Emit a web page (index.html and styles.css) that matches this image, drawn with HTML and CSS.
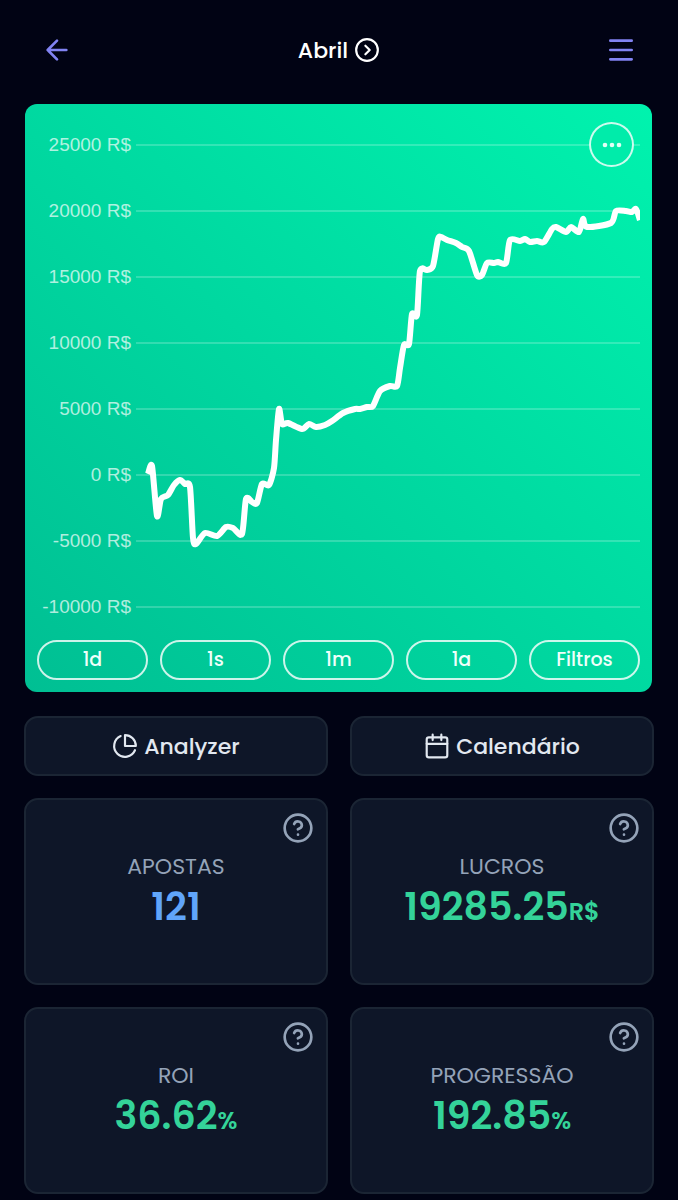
FILE: index.html
```html
<!DOCTYPE html>
<html lang="pt-BR">
<head>
    <meta charset="UTF-8">
    <meta name="viewport" content="width=device-width, initial-scale=1">
    <title>Abril</title>
    <link rel="stylesheet" href="styles.css">
</head>
<body>

    <header class="topbar">
        <a href="#" class="topbar-link" aria-label="Voltar">
            <svg class="icon" width="32" height="32" viewBox="0 0 24 24"><path d="M19 12H5M12 19l-7-7 7-7"/></svg>
        </a>
        <button type="button" class="month">
            Abril
            <svg class="icon" width="26" height="26" viewBox="0 0 24 24"><circle cx="12" cy="12" r="10"/><path d="M10.500 16l4-4-4-4"/></svg>
        </button>
        <button type="button" class="topbar-link" aria-label="Menu">
            <svg class="icon" width="32" height="32" viewBox="0 0 24 24"><path d="M4 5h16M4 12h16M4 19h16"/></svg>
        </button>
    </header>

    <main>
        <section class="chart-card">
            <div class="chart">
                <div class="axis">
                    <span>25000 R$</span>
                    <span>20000 R$</span>
                    <span>15000 R$</span>
                    <span>10000 R$</span>
                    <span>5000 R$</span>
                    <span>0 R$</span>
                    <span>-5000 R$</span>
                    <span>-10000 R$</span>
                </div>
                <svg class="plot" viewBox="0 0 504 528" preserveAspectRatio="none">
                    <path class="grid-lines" d="M0 33H504M0 99H504M0 165H504M0 231H504M0 297H504M0 363H504M0 429H504M0 495H504"/>
                    <path class="line" id="line"/>
                </svg>
                <button type="button" class="more" aria-label="Mais">
                    <svg width="20" height="6" viewBox="0 0 20 6"><circle cx="3" cy="3" r="2.300"/><circle cx="10" cy="3" r="2.300"/><circle cx="17" cy="3" r="2.300"/></svg>
                </button>
            </div>
            <div class="ranges">
                <button type="button">1d</button>
                <button type="button">1s</button>
                <button type="button">1m</button>
                <button type="button">1a</button>
                <button type="button">Filtros</button>
            </div>
        </section>

        <div class="cards">
            <button type="button" class="action">
                <svg class="icon" width="26" height="26" viewBox="0 0 24 24"><path d="M21.200 15.900A10 10 0 1 1 8 2.800"/><path d="M22 12A10 10 0 0 0 12 2v10z"/></svg>
                Analyzer
            </button>
            <button type="button" class="action">
                <svg class="icon" width="26" height="26" viewBox="0 0 24 24"><rect x="2.500" y="4" width="19" height="18.500" rx="2"/><path d="M16 1.500v5M8 1.500v5M2.500 10h19"/></svg>
                Calendário
            </button>

            <div class="stat">
                <button type="button" class="help" aria-label="Ajuda">
                    <svg class="icon" width="32" height="32" viewBox="0 0 24 24"><circle cx="12" cy="12" r="10"/><path d="M9.100 9a3 3 0 0 1 5.800 1c0 2-3 3-3 3M12 17h.01"/></svg>
                </button>
                <span class="stat-name">APOSTAS</span>
                <strong class="stat-value blue">121</strong>
            </div>
            <div class="stat">
                <button type="button" class="help" aria-label="Ajuda">
                    <svg class="icon" width="32" height="32" viewBox="0 0 24 24"><circle cx="12" cy="12" r="10"/><path d="M9.100 9a3 3 0 0 1 5.800 1c0 2-3 3-3 3M12 17h.01"/></svg>
                </button>
                <span class="stat-name">LUCROS</span>
                <strong class="stat-value">19285.25<small>R$</small></strong>
            </div>
            <div class="stat">
                <button type="button" class="help" aria-label="Ajuda">
                    <svg class="icon" width="32" height="32" viewBox="0 0 24 24"><circle cx="12" cy="12" r="10"/><path d="M9.100 9a3 3 0 0 1 5.800 1c0 2-3 3-3 3M12 17h.01"/></svg>
                </button>
                <span class="stat-name">ROI</span>
                <strong class="stat-value">36.62<small>%</small></strong>
            </div>
            <div class="stat">
                <button type="button" class="help" aria-label="Ajuda">
                    <svg class="icon" width="32" height="32" viewBox="0 0 24 24"><circle cx="12" cy="12" r="10"/><path d="M9.100 9a3 3 0 0 1 5.800 1c0 2-3 3-3 3M12 17h.01"/></svg>
                </button>
                <span class="stat-name">PROGRESSÃO</span>
                <strong class="stat-value">192.85<small>%</small></strong>
            </div>
        </div>
    </main>

    <script src="script.js"></script>
</body>
</html>
```
FILE: styles.css
```css
* {
    box-sizing: border-box;
}

body {
    margin: 0;
    padding: 0 24px 6px;
    background: #010314;
    color: #fff;
    font-family: Poppins, Inter, sans-serif;
}

button {
    margin: 0;
    padding: 0;
    border: none;
    background: none;
    color: inherit;
    font: inherit;
    cursor: pointer;
}

svg {
    display: block;
}

.icon {
    fill: none;
    stroke: currentColor;
    stroke-width: 2;
    stroke-linecap: round;
    stroke-linejoin: round;
}

.topbar {
    display: flex;
    align-items: center;
    justify-content: space-between;
    height: 100px;
    margin-bottom: 4px;
    padding: 0 17px;
}

.topbar-link {
    color: #8183f2;
}

.month {
    display: flex;
    align-items: center;
    gap: 6px;
    font-size: 22px;
    font-weight: 500;
}

/* chart */
.chart-card {
    margin: 0 2px 24px 1px;
    padding: 8px 12px 12px;
    border-radius: 12px;
    background: linear-gradient(to top right, #00bf93, #00f3ae);
}

.chart {
    display: flex;
    gap: 5px;
    position: relative;
}

.axis {
    flex: none;
    width: 94px;
    font: 19px/66px "Liberation Sans", Arial, sans-serif;
    color: rgba(255, 255, 255, 0.7);
    text-align: right;
    white-space: nowrap;
}

.axis span {
    display: block;
}

.plot {
    flex: 1;
    min-width: 0;
    height: 528px;
}

.plot path {
    fill: none;
    vector-effect: non-scaling-stroke;
}

.grid-lines {
    stroke: rgba(255, 255, 255, 0.2);
    stroke-width: 2;
}

.line {
    stroke: #fff;
    stroke-width: 6;
    stroke-linejoin: round;
}

.more {
    position: absolute;
    top: 10px;
    right: 6px;
    display: flex;
    align-items: center;
    justify-content: center;
    width: 45px;
    height: 45px;
    border: 2px solid rgba(255, 255, 255, 0.8);
    border-radius: 50%;
    background: #00ecaa;
    fill: #e0fff5;
}

.ranges {
    display: grid;
    grid-template-columns: repeat(5, 1fr);
    gap: 12px;
}

.ranges button {
    height: 40px;
    border: 2px solid rgba(255, 255, 255, 0.8);
    border-radius: 20px;
    font-size: 19px;
    font-weight: 500;
    line-height: 34px;
    color: #effffa;
}

/* cards */
.cards {
    display: grid;
    grid-template-columns: 1fr 1fr;
    gap: 22px;
}

.action,
.stat {
    border: 2px solid #1b2534;
    border-radius: 14px;
    background: #0e1628;
}

.action {
    display: flex;
    align-items: center;
    justify-content: center;
    gap: 6px;
    height: 60px;
    font-size: 22px;
    font-weight: 500;
    color: #e2e8f0;
}

.stat {
    display: flex;
    flex-direction: column;
    align-items: center;
    height: 187px;
    padding: 12px;
}

.help {
    align-self: flex-end;
    color: #94a3b8;
}

.stat-name {
    margin-top: 7px;
    font-size: 22px;
    font-weight: 400;
    line-height: 32px;
    color: #94a3b8;
}

.stat-value {
    font-size: 38px;
    font-weight: 600;
    line-height: 48px;
    color: #34d399;
}

.stat-value small {
    font-size: 24px;
}

.blue {
    color: #60a5fa;
}
```
FILE: script.js
```javascript
// balance curve, in plot units (66 units = 5000 R$, 0 R$ at y = 363)
const points = [
    [12, 362], [16, 354], [21, 404], [25, 387], [32, 383], [38, 373], [44, 368], [49, 372], [54, 375],
    [57, 426], [60, 432], [69, 421], [81, 424], [90, 415], [97, 416], [106, 422], [110, 387], [116, 390],
    [121, 391], [126, 372], [133, 373], [138, 356], [140, 328], [143, 297], [146, 312], [152, 311],
    [166, 317], [173, 312], [180, 315], [189, 313], [196, 309], [207, 301], [219, 297], [224, 297],
    [231, 295], [237, 294], [244, 279], [254, 274], [261, 274], [264, 256], [268, 233], [273, 232],
    [276, 202], [281, 203], [284, 159], [291, 158], [297, 154], [302, 127], [305, 125], [311, 128],
    [320, 131], [326, 135], [333, 139], [341, 163], [346, 163], [351, 151], [358, 151], [362, 150],
    [370, 151], [374, 128], [384, 129], [389, 127], [394, 130], [401, 129], [408, 130], [416, 117],
    [420, 115], [430, 120], [435, 115], [443, 120], [447, 107], [451, 115], [475, 111], [480, 99],
    [490, 99], [496, 100], [500, 97], [504, 108]
];

let d = "M" + points[0];
for (let i = 0; i < points.length - 1; i++) {
    const p0 = points[i - 1] || points[i];
    const p1 = points[i];
    const p2 = points[i + 1];
    const p3 = points[i + 2] || p2;
    d += " C" + (p1[0] + (p2[0] - p0[0]) / 8) + "," + (p1[1] + (p2[1] - p0[1]) / 8)
        + " " + (p2[0] - (p3[0] - p1[0]) / 8) + "," + (p2[1] - (p3[1] - p1[1]) / 8)
        + " " + p2;
}
document.getElementById("line").setAttribute("d", d);
```
